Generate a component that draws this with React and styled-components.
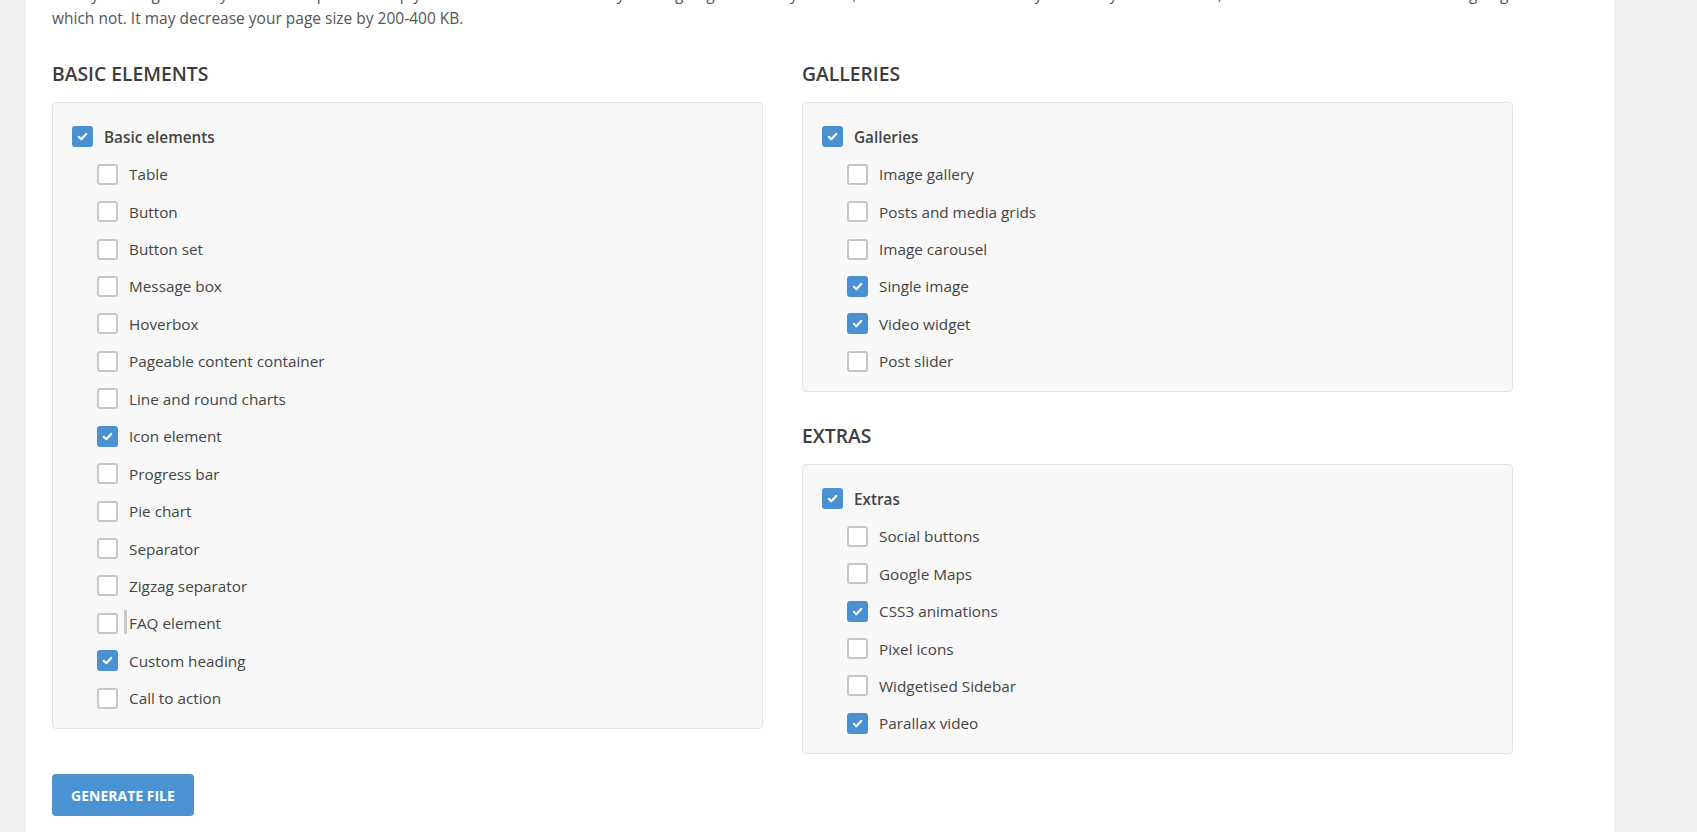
import styled, { createGlobalStyle } from 'styled-components';

const GlobalStyle = createGlobalStyle`
  body {
    margin: 0;
    background: #f0f0f0;
    font-family: "Open Sans", "Noto Sans", Arial, sans-serif;
    overflow: hidden;
  }
`;

const Page = styled.div`
  width: 1588px;
  margin-left: 26px;
  height: 832px;
  background: #fff;
  overflow: hidden;
`;

const Card = styled.div`
  padding: 0 26px 40px 26px;
`;

const Description = styled.p`
  margin: -18px 0 0;
  font-size: 15.5px;
  line-height: 24px;
  color: #555;
  white-space: nowrap;
`;

const Columns = styled.div`
  display: grid;
  grid-template-columns: 711px 711px;
  column-gap: 39px;
  align-items: start;
  margin-top: 31px;
`;

const Column = styled.div`
  display: flex;
  flex-direction: column;
`;

const Heading = styled.h3`
  margin: ${(p) => (p.$spaced ? '31px' : '0')} 0 15px;
  font-size: 19.3px;
  line-height: 26px;
  font-weight: 600;
  color: #3d3d3d;
  text-transform: uppercase;
`;

const Box = styled.div`
  background: #f8f8f8;
  border: 1px solid #e3e3e3;
  border-radius: 4px;
  padding: 15px 19px 11px;
`;

const Row = styled.label`
  display: flex;
  align-items: center;
  height: 37.45px;
  padding-left: ${(p) => (p.$sub ? '25px' : '0')};
  cursor: pointer;
`;

const Check = styled.span`
  width: 21px;
  height: 21px;
  box-sizing: border-box;
  border-radius: 3px;
  border: 2px solid ${(p) => (p.$on ? '#4a90d2' : '#c6c6c6')};
  background: ${(p) => (p.$on ? '#4a90d2' : '#fff')};
  display: flex;
  align-items: center;
  justify-content: center;
  flex-shrink: 0;
`;

const Label = styled.span`
  position: relative;
  margin-left: 11px;
  font-size: 15.3px;
  color: #444;
  font-weight: ${(p) => (p.$bold ? 600 : 400)};

  ${(p) =>
    p.$marker &&
    `
    &::before {
      content: '';
      position: absolute;
      left: -5px;
      top: 50%;
      transform: translateY(-55%);
      width: 3px;
      height: 24px;
      background: #c9c9c9;
    }
  `}
`;

const GenerateButton = styled.button`
  margin-top: 20px;
  width: 142px;
  height: 42px;
  border: none;
  border-radius: 4px;
  background: #4b92d3;
  color: #fff;
  font-family: "Open Sans", "Noto Sans", Arial, sans-serif;
  font-size: 14px;
  font-weight: 700;
  cursor: pointer;
`;

const Tick = () => (
  <svg width="13" height="13" viewBox="0 0 13 13">
    <path d="M2.8 6.8 L5.3 9.2 L10.2 3.9" fill="none" stroke="#fff" strokeWidth="2.2" strokeLinecap="round" strokeLinejoin="round" />
  </svg>
);

const Item = ({ text, on, sub, bold, marker }) => (
  <Row $sub={sub}>
    <Check $on={on}>{on && <Tick />}</Check>
    <Label $bold={bold} $marker={marker}>{text}</Label>
  </Row>
);

const Group = ({ title, items }) => (
  <Box>
    <Item text={title} on bold />
    {items.map((it) => (
      <Item key={it.t} text={it.t} on={it.on} marker={it.mark} sub />
    ))}
  </Box>
);

const basic = [
  { t: 'Table' },
  { t: 'Button' },
  { t: 'Button set' },
  { t: 'Message box' },
  { t: 'Hoverbox' },
  { t: 'Pageable content container' },
  { t: 'Line and round charts' },
  { t: 'Icon element', on: true },
  { t: 'Progress bar' },
  { t: 'Pie chart' },
  { t: 'Separator' },
  { t: 'Zigzag separator' },
  { t: 'FAQ element', mark: true },
  { t: 'Custom heading', on: true },
  { t: 'Call to action' },
];

const galleries = [
  { t: 'Image gallery' },
  { t: 'Posts and media grids' },
  { t: 'Image carousel' },
  { t: 'Single image', on: true },
  { t: 'Video widget', on: true },
  { t: 'Post slider' },
];

const extras = [
  { t: 'Social buttons' },
  { t: 'Google Maps' },
  { t: 'CSS3 animations', on: true },
  { t: 'Pixel icons' },
  { t: 'Widgetised Sidebar' },
  { t: 'Parallax video', on: true },
];

const App = () => (
  <Page>
    <GlobalStyle />
    <Card>
      <Description>
        Here you can generate your own scripts file. Simply select below the elements you are going to use on your site, and leave unchecked any element you don't need, so the theme knows which one is going to be loaded and
        <br />
        which not. It may decrease your page size by 200-400 KB.
      </Description>

      <Columns>
        <Column>
          <Heading>Basic elements</Heading>
          <Group title="Basic elements" items={basic} />
        </Column>
        <Column>
          <Heading>Galleries</Heading>
          <Group title="Galleries" items={galleries} />
          <Heading $spaced>Extras</Heading>
          <Group title="Extras" items={extras} />
        </Column>
      </Columns>

      <GenerateButton>GENERATE FILE</GenerateButton>
    </Card>
  </Page>
);

export default App;
